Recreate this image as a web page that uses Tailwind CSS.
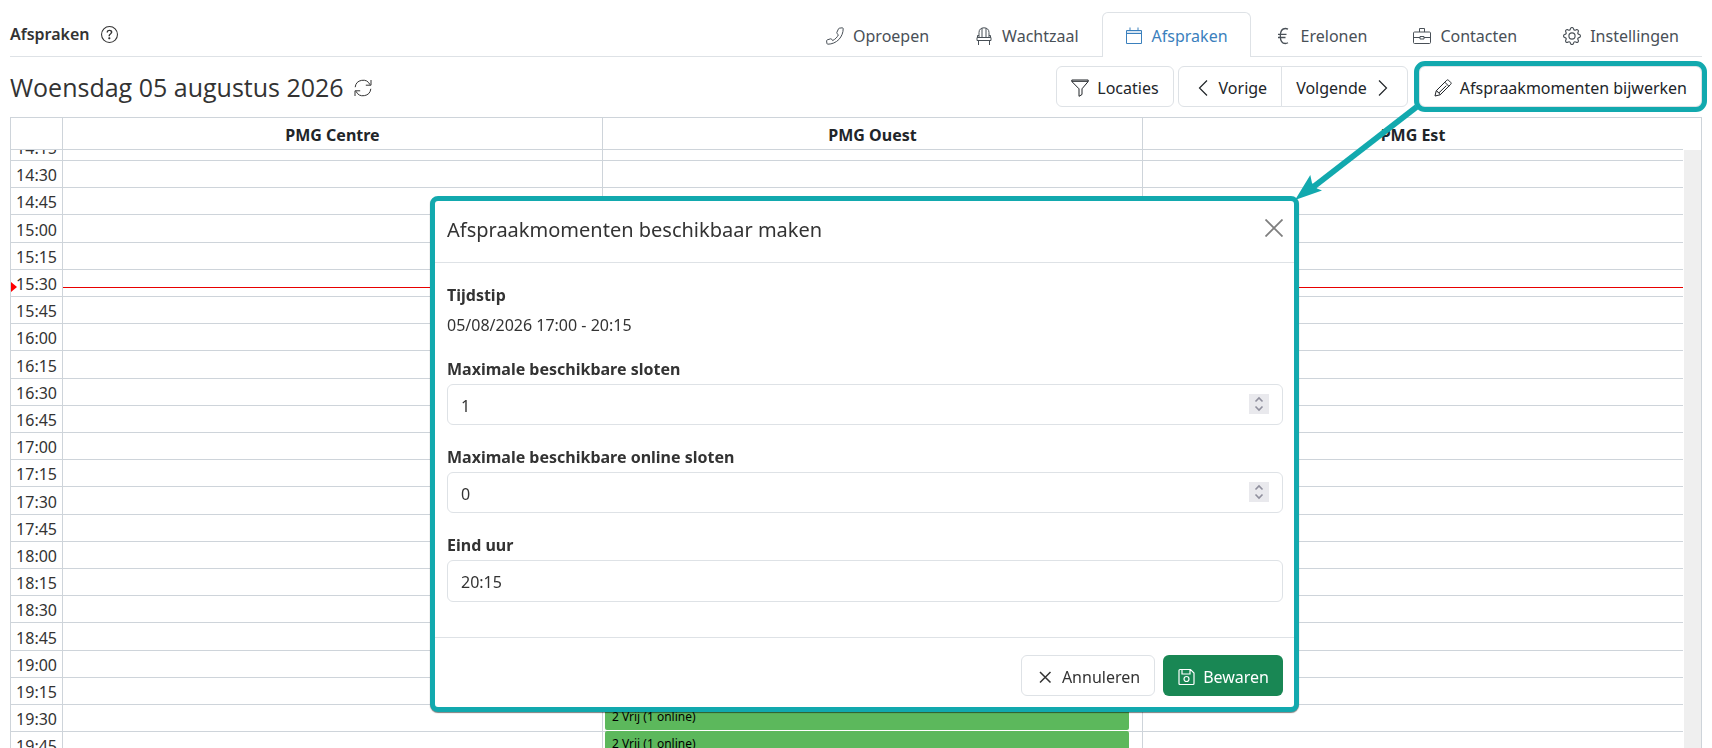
<!DOCTYPE html>
<html lang="nl">
  <head>
    <meta charset="UTF-8" />
    <meta name="viewport" content="width=device-width, initial-scale=1.0" />
    <title>Afspraken</title>
    <script src="https://cdn.jsdelivr.net/npm/@tailwindcss/browser@4"></script>
  </head>

  <body class="h-screen overflow-hidden bg-white font-['Noto_Sans','Open_Sans',sans-serif] text-base text-[#333]">
    <div class="flex h-full flex-col px-[10px] pt-3">
      <!-- top bar -->
      <header class="flex items-end border-b border-[#dee2e6]">
        <div class="flex h-11 flex-1 items-center gap-[11px]">
          <h2 class="font-semibold">Afspraken</h2>
          <button type="button" aria-label="Help">
            <svg class="size-[17px]" viewBox="0 0 16 16" fill="currentColor">
              <path d="M8 15A7 7 0 1 1 8 1a7 7 0 0 1 0 14m0 1A8 8 0 1 0 8 0a8 8 0 0 0 0 16" />
              <path d="M5.255 5.786a.237.237 0 0 0 .241.247h.825c.138 0 .248-.113.266-.25.09-.656.54-1.134 1.342-1.134.686 0 1.314.343 1.314 1.168 0 .635-.374.927-.965 1.371-.673.489-1.206 1.06-1.168 1.987l.003.217a.25.25 0 0 0 .25.246h.811a.25.25 0 0 0 .25-.25v-.105c0-.718.273-.927 1.01-1.486.609-.463 1.244-.977 1.244-2.056 0-1.511-1.276-2.241-2.673-2.241-1.267 0-2.655.59-2.75 2.286m1.557 5.763c0 .533.425.927 1.01.927.609 0 1.028-.394 1.028-.927 0-.552-.42-.94-1.029-.94-.584 0-1.009.388-1.009.94" />
            </svg>
          </button>
        </div>
        <nav class="-mb-px flex text-[#495057]">
          <a href="#" class="flex h-[45px] items-center gap-[9px] px-[23px] pt-[2px]">
            <svg class="size-[18px]" viewBox="0 0 18 18" fill="none" stroke="currentColor" stroke-linejoin="round">
              <path d="M13.300 1.200 16.200.8c.6 0 1 .3 1 .9 0 3.800-1.400 7.600-4.300 10.800-3 3-7 4.700-11 4.700-.5 0-.9-.3-1-.8L.6 13.900c0-.5.2-.8.600-1l3.400-1.100c.4-.1.800 0 1 .300l1 1.500c2.600-1.300 4.600-3.300 5.800-5.800l-1.400-1.200c-.3-.3-.4-.7-.2-1.100L12.500 1.800c.1-.3.400-.5.800-.6Z" />
            </svg>
            Oproepen
          </a>
          <a href="#" class="flex h-[45px] items-center gap-[9px] px-[23px] pt-[2px]">
            <svg class="size-[18px]" viewBox="0 0 18 18" fill="none" stroke="currentColor">
              <path d="M4 11V5.500C4 2.500 6 .8 9 .8s5 1.700 5 4.700V11M7 10V1.200M11 10V1.200M2 10.500h14v3H2zM3.500 13.500V18M14.500 13.500V18M4 8.500H2.500V10M14 8.500h1.500V10" />
            </svg>
            Wachtzaal
          </a>
          <a href="#" aria-current="page" class="flex h-[45px] items-center gap-[9px] rounded-t-md border border-b-0 border-[#dee2e6] bg-white px-[22px] pt-px text-[#3a80bd]">
            <svg class="size-[18px]" viewBox="0 0 18 18" fill="none" stroke="currentColor">
              <path d="M1.500 3.500h15v13h-15zM1.500 6.500h15M5 3.500V.5M13 3.500V.5" />
              <path d="M2 5h14" stroke-opacity=".4" />
            </svg>
            Afspraken
          </a>
          <a href="#" class="flex h-[45px] items-center gap-[9px] px-[23px] pt-[2px]">
            <svg class="size-[18px]" viewBox="0 0 18 18" fill="none" stroke="currentColor" stroke-width="1.300">
              <path d="M14 2.200C13 1.700 12.300 1.500 11.400 1.500 8.200 1.500 6.300 4.500 6.300 9s1.900 7.500 5.100 7.500c.9 0 1.700-.2 2.600-.7M4 7.300h8.500M4 10.500h7.500" />
            </svg>
            Erelonen
          </a>
          <a href="#" class="flex h-[45px] items-center gap-[9px] px-[23px] pt-[2px]">
            <svg class="size-[18px]" viewBox="0 0 18 18" fill="none" stroke="currentColor">
              <path d="M1.500 5h15c.6 0 1 .4 1 1v9.500c0 .6-.4 1-1 1h-15c-.6 0-1-.4-1-1V6c0-.6.400-1 1-1ZM6.500 5V1.500h5V5M.5 10.500h6.500M11 10.500h6.500M7 9.500h4v2.500H7z" />
            </svg>
            Contacten
          </a>
          <a href="#" class="flex h-[45px] items-center gap-[9px] px-[23px] pt-[2px]">
            <svg class="size-[18px]" viewBox="0 0 16 16" fill="currentColor">
              <path d="M8 4.754a3.246 3.246 0 1 0 0 6.492 3.246 3.246 0 0 0 0-6.492M5.754 8a2.246 2.246 0 1 1 4.492 0 2.246 2.246 0 0 1-4.492 0" />
              <path d="M9.796 1.343c-.527-1.790-3.065-1.790-3.592 0l-.094.319a.873.873 0 0 1-1.255.52l-.292-.16c-1.640-.892-3.433.902-2.540 2.541l.159.292a.873.873 0 0 1-.52 1.255l-.319.094c-1.790.527-1.790 3.065 0 3.592l.319.094a.873.873 0 0 1 .52 1.255l-.16.292c-.892 1.640.901 3.434 2.541 2.540l.292-.159a.873.873 0 0 1 1.255.52l.094.319c.527 1.790 3.065 1.790 3.592 0l.094-.319a.873.873 0 0 1 1.255-.52l.292.16c1.640.893 3.434-.902 2.540-2.541l-.159-.292a.873.873 0 0 1 .52-1.255l.319-.094c1.790-.527 1.790-3.065 0-3.592l-.319-.094a.873.873 0 0 1-.52-1.255l.16-.292c.893-1.640-.902-3.433-2.541-2.540l-.292.159a.873.873 0 0 1-1.255-.52zm-2.633.283c.246-.835 1.428-.835 1.674 0l.094.319a1.873 1.873 0 0 0 2.693 1.115l.291-.16c.764-.415 1.600.42 1.184 1.185l-.159.292a1.873 1.873 0 0 0 1.116 2.692l.318.094c.835.246.835 1.428 0 1.674l-.319.094a1.873 1.873 0 0 0-1.115 2.693l.16.291c.415.764-.42 1.600-1.185 1.184l-.291-.159a1.873 1.873 0 0 0-2.693 1.116l-.094.318c-.246.835-1.428.835-1.674 0l-.094-.319a1.873 1.873 0 0 0-2.692-1.115l-.292.16c-.764.415-1.600-.42-1.184-1.185l.159-.291A1.873 1.873 0 0 0 1.945 8.930l-.319-.094c-.835-.246-.835-1.428 0-1.674l.319-.094A1.873 1.873 0 0 0 3.060 4.377l-.16-.292c-.415-.764.42-1.600 1.185-1.184l.292.159a1.873 1.873 0 0 0 2.692-1.115z" />
            </svg>
            Instellingen
          </a>
        </nav>
      </header>

      <!-- toolbar -->
      <div class="flex h-[60px] items-center pb-[1px]">
        <h1 class="flex flex-1 items-center gap-[10px] pt-[2px] font-['Open_Sans','Noto_Sans',sans-serif] text-[25px]">
          Woensdag 05 augustus 2026
          <button type="button" aria-label="Vernieuwen">
            <svg class="size-[18px]" viewBox="0 0 18 18" fill="none" stroke="currentColor">
              <path d="M1.200 8.200A7.800 7.800 0 0 1 16 5.700M17 1v5.200h-5.200M16.800 9.800A7.800 7.800 0 0 1 2 12.300M1 17v-5.200h5.200" />
            </svg>
          </button>
        </h1>
        <div class="flex text-[#212529]">
          <button type="button" class="mr-1 flex h-[41px] items-center gap-2 rounded-md border border-[#dee2e6] px-[14px] pt-[2px]">
            <svg class="size-[18px]" viewBox="0 0 18 18" fill="none" stroke="currentColor" stroke-linejoin="round">
              <path d="M.8 1h16.400v1.500L11 9.800v5.700L8 17.300V9.800L.8 2.500zM1 2.300h16" />
            </svg>
            Locaties
          </button>
          <button type="button" class="flex h-[41px] items-center gap-2 rounded-l-md border border-[#dee2e6] px-[14px] pt-[2px]">
            <svg class="size-[18px]" viewBox="0 0 18 18" fill="none" stroke="currentColor" stroke-width="1.200">
              <path d="M14 1.500 6.500 9l7.500 7.500" />
            </svg>
            Vorige
          </button>
          <button type="button" class="mr-[11px] -ml-px flex h-[41px] items-center gap-2 rounded-r-md border border-[#dee2e6] px-[14px] pt-[2px]">
            Volgende
            <svg class="size-[18px]" viewBox="0 0 18 18" fill="none" stroke="currentColor" stroke-width="1.200">
              <path d="M4 1.500 11.500 9 4 16.500" />
            </svg>
          </button>
          <div class="relative">
            <button type="button" class="flex h-[41px] items-center gap-2 rounded-md border border-[#dee2e6] px-[14px] pt-[2px] outline-5 outline-[#12a9ae]">
              <svg class="size-[18px]" viewBox="0 0 18 18" fill="none" stroke="currentColor" stroke-linejoin="round">
                <path d="M1 17l1.200-5.200L12.700 1.300c.6-.6 1.300-.6 1.900 0l2.100 2.100c.6.6.6 1.300 0 1.900L6.200 15.800zM10.800 3.200l4 4M2.200 11.800c1 0 1.500.5 1.500 1.400 1 0 1.500.5 1.500 1.400.7 0 1 .4 1 1.200M12.300 6.700 5 13.800" />
              </svg>
              Afspraakmomenten bijwerken
            </button>
            <!-- pointer from the button to the dialog -->
            <svg class="absolute -left-[125px] top-[38px] z-20 h-[97px] w-[125px]" viewBox="0 0 125 97" fill="#12a9ae">
              <path d="M122.500 3 18 84" stroke="#12a9ae" stroke-width="6" />
              <path d="M1 96 16.300 71l1.700 8 5 5.500 5 2z" />
            </svg>
          </div>
        </div>
      </div>

      <!-- calendar -->
      <main class="flex min-h-0 flex-1 flex-col border border-b-0 border-[#ced4da]">
        <div class="pr-[18px]">
          <table class="w-full table-fixed border-separate border-spacing-0">
            <colgroup>
              <col class="w-[52px]" />
              <col /><col /><col />
            </colgroup>
            <thead>
              <tr class="h-8 text-[#212529]">
                <th class="border-r border-b border-[#ced4da]"></th>
                <th class="border-r border-b border-[#ced4da] pt-[2px] font-bold">PMG Centre</th>
                <th class="border-r border-b border-[#ced4da] pt-[2px] font-bold">PMG Ouest</th>
                <th class="border-b border-[#ced4da] pt-[2px] font-bold">PMG Est</th>
              </tr>
            </thead>
          </table>
        </div>
        <div class="flex min-h-0 flex-1 overflow-hidden">
          <div class="relative -mt-4 mr-px flex-1">
            <table class="w-full table-fixed border-separate border-spacing-0">
              <colgroup>
                <col class="w-[52px]" />
                <col /><col /><col />
              </colgroup>
              <tbody id="slots" class="[&>tr]:h-[27px] [&>tr:nth-child(5n+4)]:h-7"></tbody>
            </table>
            <!-- current time -->
            <div class="absolute inset-x-0 top-[148px] flex items-center">
              <div class="h-0 w-0 border-y-5 border-l-6 border-y-transparent border-l-[#ff0000]"></div>
              <div class="ml-[46px] h-px flex-1 bg-[#e80000]"></div>
            </div>
          </div>
          <div class="w-[17px] bg-[#efefef]"></div>
        </div>
      </main>
    </div>

    <!-- dialog -->
    <div class="fixed inset-x-0 top-[196px] flex justify-center pl-[17px]">
      <form role="dialog" aria-labelledby="dialog-title" class="w-full max-w-[869px] rounded-lg border-5 border-[#12a9ae] bg-white shadow-[0_1px_1px_rgba(0,0,0,0.5)]">
        <div class="flex h-[62px] items-center justify-between border-b border-[#dee2e6] pr-[11px] pb-1 pl-3">
          <h3 id="dialog-title" class="text-xl">Afspraakmomenten beschikbaar maken</h3>
          <button type="button" aria-label="Sluiten" class="pb-1 text-[#7f7f7f]">
            <svg class="size-[18px]" viewBox="0 0 18 18" fill="none" stroke="currentColor" stroke-width="1.800">
              <path d="M.5.5l17 17M17.500.5l-17 17" />
            </svg>
          </button>
        </div>
        <div class="flex flex-col pt-[19px] pr-[11px] pb-[35px] pl-3">
          <p class="leading-[27px] font-bold">Tijdstip</p>
          <p class="mt-[3px] mb-[17px] leading-[27px]">05/08/2026 17:00 - 20:15</p>

          <label for="max-slots" class="leading-[27px] font-bold">Maximale beschikbare sloten</label>
          <div class="relative mt-px mb-[19px]">
            <input id="max-slots" type="number" value="1" class="h-[41px] w-full [appearance:textfield] rounded-md border border-[#dee2e6] px-[13px] pt-[2px]" />
            <svg class="absolute top-[10px] right-[14px] size-5 bg-[#e9e9ed] text-[#8f8f9d]" viewBox="0 0 20 20" fill="none" stroke="currentColor" stroke-width="1.600">
              <path d="M6.500 7.500 10 4l3.500 3.500M6.500 12.500 10 16l3.500-3.500" />
            </svg>
          </div>

          <label for="max-online" class="leading-[27px] font-bold">Maximale beschikbare online sloten</label>
          <div class="relative mt-px mb-[19px]">
            <input id="max-online" type="number" value="0" class="h-[41px] w-full [appearance:textfield] rounded-md border border-[#dee2e6] px-[13px] pt-[2px]" />
            <svg class="absolute top-[10px] right-[14px] size-5 bg-[#e9e9ed] text-[#8f8f9d]" viewBox="0 0 20 20" fill="none" stroke="currentColor" stroke-width="1.600">
              <path d="M6.500 7.500 10 4l3.500 3.500M6.500 12.500 10 16l3.500-3.500" />
            </svg>
          </div>

          <label for="end-time" class="leading-[27px] font-bold">Eind uur</label>
          <input id="end-time" type="text" value="20:15" class="mt-px h-[42px] w-full rounded-md border border-[#dee2e6] px-[13px] pt-[2px]" />
        </div>
        <div class="flex justify-end gap-2 border-t border-[#dee2e6] px-[11px] pt-[17px] pb-[11px]">
          <button type="button" class="flex h-[41px] items-center gap-2 rounded-md border border-[#dee2e6] px-[14px] pt-[2px]">
            <svg class="size-[18px]" viewBox="0 0 18 18" fill="none" stroke="currentColor" stroke-width="1.500">
              <path d="M4 4l10.500 10.500M14.500 4 4 14.500" />
            </svg>
            Annuleren
          </button>
          <button type="submit" class="flex h-[41px] items-center gap-2 rounded-md bg-[#198754] px-[14px] pt-[2px] text-white">
            <svg class="size-[18px]" viewBox="0 0 18 18" fill="none" stroke="currentColor" stroke-width="1.200">
              <path d="M3 1.500h10.500L17 5v10.500c0 .6-.4 1-1 1H3c-.6 0-1-.4-1-1v-13c0-.6.400-1 1-1ZM5 1.500v4.500h8V1.500" />
              <circle cx="9.500" cy="11" r="2.500" />
            </svg>
            Bewaren
          </button>
        </div>
      </form>
    </div>

    <script>
      var slots = document.getElementById("slots");
      var events = { "19:30": "2 Vrij (1 online)", "19:45": "2 Vrij (1 online)" };
      var html = "";
      for (var m = 14 * 60 + 15; m <= 19 * 60 + 45; m += 15) {
        var time = Math.floor(m / 60) + ":" + String(m % 60).padStart(2, "0");
        var event = events[time]
          ? `<div class="absolute -top-px left-[2px] right-[13px] h-[26px] rounded-xs bg-[#5cb85c] px-[7px] text-xs leading-[26px] text-black">${events[time]}</div>`
          : "";
        html += `<tr>
            <th class="border-r border-b border-[#ced4da] pt-[2px] pr-[5px] text-right leading-6 font-normal">${time}</th>
            <td class="border-r border-b border-[#ced4da]"></td>
            <td class="relative border-r border-b border-[#ced4da]">${event}</td>
            <td class="border-b border-[#ced4da]"></td>
          </tr>`;
      }
      slots.innerHTML = html;
    </script>
  </body>
</html>
